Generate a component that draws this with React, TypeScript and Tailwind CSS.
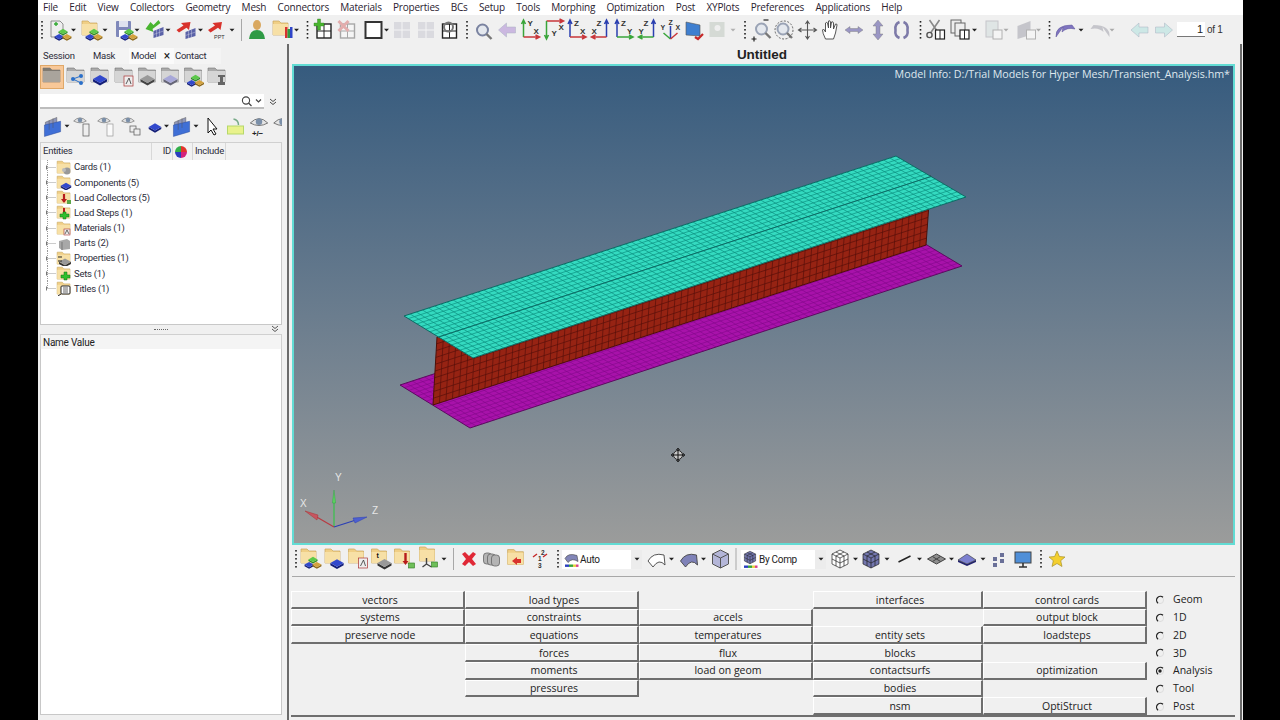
import React from "react";

type Item = [number, React.ReactNode];

const menus = ["File", "Edit", "View", "Collectors", "Geometry", "Mesh", "Connectors", "Materials", "Properties", "BCs", "Setup", "Tools", "Morphing", "Optimization", "Post", "XYPlots", "Preferences", "Applications", "Help"];

const tree = ["Cards (1)", "Components (5)", "Load Collectors (5)", "Load Steps (1)", "Materials (1)", "Parts (2)", "Properties (1)", "Sets (1)", "Titles (1)"];

const cells = [
  "vectors", "load types", "", "interfaces", "control cards",
  "systems", "constraints", "accels", "", "output block",
  "preserve node", "equations", "temperatures", "entity sets", "loadsteps",
  "", "forces", "flux", "blocks", "",
  "", "moments", "load on geom", "contactsurfs", "optimization",
  "", "pressures", "", "bodies", "",
  "", "", "", "nsm", "OptiStruct",
];

const radios = ["Geom", "1D", "2D", "3D", "Analysis", "Tool", "Post"];

// lays icons out by flow, each svg runs from midpoint to midpoint so the drawing lands on its centre
function IconRow({ items, start, end, h }: { items: Item[]; start: number; end: number; h: number }) {
  return (
    <div className="flex shrink-0 items-center">
      {items.map(([c, node], i) => {
        const l = i === 0 ? start : (items[i - 1][0] + c) / 2;
        const r = i === items.length - 1 ? end : (items[i + 1][0] + c) / 2;
        return (
          <svg key={i} width={r - l} height={h} viewBox={`${l - c} ${-h / 2} ${r - l} ${h}`} className="block shrink-0 overflow-visible">
            {node}
          </svg>
        );
      })}
    </div>
  );
}

const Grip = () => (
  <g fill="#222">
    {[-9, -5, -1, 3, 7].map((y) => (
      <rect key={y} x={-0.8} y={y} width={1.6} height={1.6} />
    ))}
  </g>
);

const Drop = ({ c = "#222" }: { c?: string }) => <path d="M-2.5 -1.2 H2.5 L0 1.4Z" fill={c} />;

const Sep = () => <rect x={-0.5} y={-11} width={1} height={22} fill="#a8a8a8" />;

const Diamond = ({ x = 0, y = 0, s = 1, c = "#3249cc", d = "#141f78" }: { x?: number; y?: number; s?: number; c?: string; d?: string }) => (
  <g transform={`translate(${x} ${y}) scale(${s})`}>
    <path d="M-7 1 L0 5 L7 1 V3.4 L0 7.4 L-7 3.4Z" fill={d} />
    <path d="M-7 1 L0 -3 L7 1 L0 5Z" fill={c} />
  </g>
);

const Cluster = ({ x = 0, y = 0, s = 0.65 }: { x?: number; y?: number; s?: number }) => (
  <g transform={`translate(${x} ${y}) scale(${s})`}>
    <Diamond y={-5} c="#5cc94a" d="#2d8a28" />
    <Diamond x={-6} y={3} />
    <Diamond x={6} y={3} c="#d3a23d" d="#8a6518" />
  </g>
);

const Folder = ({ x = 0, y = 0, s = 1 }: { x?: number; y?: number; s?: number }) => (
  <g transform={`translate(${x} ${y}) scale(${s})`}>
    <path d="M-8 -8 H-2 L0 -6 H7 V6 H-8Z" fill="#f0cf86" stroke="#c8a55c" strokeWidth={0.7} />
    <path d="M-8 -5 H7 V6 H-8Z" fill="#f7e0a6" />
  </g>
);

const GrayFolder = ({ sel }: { sel?: boolean }) => (
  <g>
    <path d="M-9 -9 H-2 L0 -7 H8 V5 H-9Z" fill={sel ? "#807a70" : "#aaa"} stroke="#777" strokeWidth={0.6} />
    <rect x={-9} y={-6} width={17} height={11} fill={sel ? "#a9a49c" : "#d5d5d5"} />
  </g>
);

const Panes = ({ s = 1 }: { s?: number }) => (
  <g transform={`scale(${s})`}>
    <path d="M-8 -4 L4 -9 V3 L-8 8Z" fill="#8f96b8" stroke="#555" strokeWidth={0.5} />
    <path d="M-9 -1 L8 -5 V6 L-9 11Z" fill="#3f6fd6" stroke="#2b4a9c" strokeWidth={0.5} />
    <path d="M-4 -6 V4 M0 -8 V2" stroke="#555" strokeWidth={0.5} />
  </g>
);

const Win = ({ x = 0, y = 0 }: { x?: number; y?: number }) => (
  <g transform={`translate(${x} ${y})`}>
    <rect x={-7} y={-7} width={14} height={14} fill="#fff" stroke="#222" strokeWidth={1.4} />
    <path d="M0 -7 V7 M-7 0 H7" stroke="#222" strokeWidth={1} />
  </g>
);

const Panel = ({ x = 0, y = 0 }: { x?: number; y?: number }) => (
  <g transform={`translate(${x} ${y})`}>
    <path d="M-5 -1 L5 -5 V3 L-5 6Z" fill="#5a62a8" />
    <path d="M-2 -2 V5 M1 -3 V4 M-5 2.5 L5 -1" stroke="#c6c9e0" strokeWidth={0.5} />
  </g>
);

const RedArrow = ({ x = 0, y = 0 }: { x?: number; y?: number }) => (
  <path transform={`translate(${x} ${y})`} d="M-7 3 L0 -1.5 L-2.5 -4 L7 -5 L5.5 3 L3 0.8 L-4.5 5.5Z" fill="#d8322c" />
);

const Eye = ({ x = 0, y = 0, s = 1 }: { x?: number; y?: number; s?: number }) => (
  <g transform={`translate(${x} ${y}) scale(${s})`}>
    <path d="M-7 0 Q0 -7 7 0 Q0 4 -7 0Z" fill="#e5e5e5" stroke="#777" strokeWidth={0.8} />
    <circle cy={-1} r={2.6} fill="#7b8fa8" />
  </g>
);

function Axis({ v, h, vl, hl, flip, down }: { v: string; h: string; vl: string; hl: string; flip?: boolean; down?: boolean }) {
  return (
    <g transform="translate(-11 -12)" fontFamily="Liberation Sans" fontWeight="bold" fontSize="8" fill="#333">
      {flip ? (
        <>
          <path d={`M17 3 V19 M15 6 L17 2 L19 6`} stroke={v} strokeWidth={1.5} fill="none" />
          <path d="M17 19 H3 M6 17 L2 19 L6 21" stroke={h} strokeWidth={1.5} fill="none" />
          <text x={7} y={8}>{vl}</text>
          <text x={2} y={16}>{hl}</text>
        </>
      ) : down ? (
        <>
          <path d="M4 3 H20 M17 1 L21 3 L17 5" stroke={h} strokeWidth={1.5} fill="none" />
          <path d="M4 3 V20 M2 17 L4 21 L6 17" stroke={v} strokeWidth={1.5} fill="none" />
          <text x={9} y={18}>{vl}</text>
          <text x={16} y={12}>{hl}</text>
        </>
      ) : (
        <>
          <path d="M4 3 V19 M2 6 L4 2 L6 6" stroke={v} strokeWidth={1.5} fill="none" />
          <path d="M4 19 H19 M16 17 L20 19 L16 21" stroke={h} strokeWidth={1.5} fill="none" />
          <text x={8} y={8}>{vl}</text>
          <text x={14} y={16}>{hl}</text>
        </>
      )}
    </g>
  );
}

const Glass = ({ x = 0, y = 0, c = "#9aa3b5" }: { x?: number; y?: number; c?: string }) => (
  <g transform={`translate(${x} ${y})`}>
    <circle r={5.5} fill="#e4e8ee" stroke={c} strokeWidth={2} />
    <path d="M4 4 L9 9" stroke="#777" strokeWidth={2.4} />
  </g>
);

const ArrowBig = ({ dir, c = "#cbb8e0" }: { dir: number; c?: string }) => (
  <path transform={`scale(${dir} 1)`} d="M-9 0 L-1 -7 V-3 H8 V3 H-1 V7Z" fill={c} stroke="#a8b0c0" strokeWidth={0.5} />
);

const Doc = ({ x = 0, y = 0 }: { x?: number; y?: number }) => (
  <g transform={`translate(${x} ${y})`}>
    <path d="M-6 -8 H3 L6 -5 V8 H-6Z" fill="#eee" stroke="#777" strokeWidth={0.8} />
  </g>
);

const Rainbow = ({ y }: { y: number }) => (
  <g>
    <rect x={-6} y={y} width={4} height={2.4} fill="#2a3fc0" />
    <rect x={-2} y={y} width={4} height={2.4} fill="#3aa53a" />
    <rect x={2} y={y} width={3} height={2.4} fill="#e6d040" />
    <rect x={5} y={y} width={2.5} height={2.4} fill="#d8408a" />
  </g>
);

const topItems: Item[] = [
  [42, <Grip />],
  [60, <g><Doc x={-3} y={-1} /><path d="M-6 -6 h4 M-4 -8 v4" stroke="#3a3" strokeWidth={1.4} /><Cluster x={3} y={4} /></g>],
  [73, <Drop />],
  [91, <g><Folder x={-1} y={-1} /><Cluster x={3} y={4} /></g>],
  [105, <Drop />],
  [125, <g><rect x={-9} y={-9} width={15} height={16} rx={1} fill="#7f88ba" /><rect x={-6} y={-9} width={9} height={6} fill="#dfe2ef" /><rect x={-6} y={0} width={9} height={7} fill="#fff" /><Cluster x={4} y={4} /></g>],
  [137, <Drop />],
  [156, <g><path d="M2 -10 L-3 -5 L-6 -8 L-11 -1 L-3 2 L-4 -1 L4 -7Z" fill="#49b52f" /><Panel x={2} y={2} /></g>],
  [168, <Drop />],
  [189, <g><RedArrow x={-6} y={-3} /><Panel x={1} y={3} /></g>],
  [200, <Drop />],
  [216, <g><RedArrow x={-1} y={-3} /><text x={-2} y={9} fontSize={5.5} fontFamily="Liberation Sans" fill="#333">PPT</text></g>],
  [232, <Drop />],
  [241, <Sep />],
  [257, <g><ellipse cy={-5} rx={4} ry={5} fill="#d9a860" /><path d="M-8 9 Q-7 0 0 0 Q7 0 8 9Z" fill="#2f9a45" /></g>],
  [283, <g><Folder x={-2} y={-1} /><rect x={2} y={-3} width={2.5} height={11} fill="#d83030" /><rect x={4.5} y={-1} width={2.5} height={9} fill="#2f9a45" /><rect x={7} y={-3} width={2.5} height={11} fill="#2f45c8" /></g>],
  [296, <Drop />],
  [307, <Grip />],
  [323, <g><Win x={1} y={1} /><path d="M-9 -7 H-5.5 V-11 H-2.5 V-7 H1 V-4 H-2.5 V0 H-5.5 V-4 H-9Z" fill="#49b52f" stroke="#2d7a20" strokeWidth={0.4} /></g>],
  [346, <g opacity={0.35}><Win x={1} y={1} /><path d="M-8 -9 L2 1 M2 -9 L-8 1" stroke="#c33" strokeWidth={3} /></g>],
  [373, <rect x={-8} y={-8} width={16} height={16} fill="#fff" stroke="#333" strokeWidth={2} />],
  [386, <Drop />],
  [402, <g opacity={0.3}><rect x={-8} y={-8} width={16} height={16} fill="#aab" /><path d="M0 -8 V8 M-8 0 H8" stroke="#fff" /></g>],
  [426, <g opacity={0.3}><rect x={-8} y={-8} width={16} height={16} fill="#aab" /><path d="M0 -8 V8 M-8 0 H8" stroke="#fff" /></g>],
  [449, <g><Win x={0} y={1} /><circle cx={-1} cy={-3} r={4.5} fill="none" stroke="#777" strokeWidth={2} /></g>],
  [467, <Grip />],
  [482, <Glass c="#7a83a0" />],
  [507, <ArrowBig dir={1} />],
  [530, <Axis v="#3aa53a" h="#c8363a" vl="Y" hl="X" />],
  [553, <Axis v="#3aa53a" h="#c8363a" vl="Y" hl="X" down />],
  [577, <Axis v="#2a3fb0" h="#c8363a" vl="Z" hl="X" />],
  [600, <Axis v="#2a3fb0" h="#c8363a" vl="Z" hl="X" flip />],
  [624, <Axis v="#2a3fb0" h="#3aa53a" vl="Z" hl="Y" />],
  [647, <Axis v="#2a3fb0" h="#3aa53a" vl="Z" hl="Y" flip />],
  [670, <g fontFamily="Liberation Sans" fontWeight="bold" fontSize="7" fill="#333"><path d="M0 9 V-4" stroke="#2a3fb0" strokeWidth={1.5} /><path d="M0 9 L-7 3" stroke="#3aa53a" strokeWidth={1.5} /><path d="M0 9 L7 3" stroke="#c8363a" strokeWidth={1.5} /><text x={-10} y={0}>Y</text><text x={-2} y={-5}>Z</text><text x={5} y={0}>X</text></g>],
  [694, <g><path d="M-8 -8 L6 -5 V6 L-8 5Z" fill="#3f7fd0" stroke="#555" strokeWidth={0.6} /><path d="M1 7 L4 9 L9 4" stroke="#c62828" strokeWidth={2.2} fill="none" /></g>],
  [717, <g opacity={0.3}><rect x={-8} y={-8} width={15} height={15} fill="#9a9" /><circle cy={-2} r={3} fill="#eee" /></g>],
  [733, <g opacity={0.3}><Drop /></g>],
  [745, <Grip />],
  [760, <g><Glass x={1} y={-1} /><path d="M-9 9 H-4 M-6.5 6.5 V11.5" stroke="#222" strokeWidth={1.2} /><path d="M3 -10 H8" stroke="#222" strokeWidth={1.2} /></g>],
  [784, <g><Glass x={-1} y={-1} /><circle r={9} fill="none" stroke="#444" strokeWidth={0.8} strokeDasharray="2 1.5" /></g>],
  [807, <path d="M0 -9 V9 M-9 0 H9 M-2 -6 L0 -9 L2 -6 M-2 6 L0 9 L2 6 M-6 -2 L-9 0 L-6 2 M6 -2 L9 0 L6 2" stroke="#555" strokeWidth={1.1} fill="none" />],
  [830, <path d="M-5 9 Q-8 3 -8 0 L-7 -1 L-5 2 V-7 Q-3.5 -8.5 -3 -7 L-2 -2 V-9 Q-0.5 -10 0 -8 V-2 L1 -8 Q2.5 -9 3 -7 V-1 L5 -6 Q6.5 -6.5 6.5 -5 L5 3 L3 9Z" fill="#fff" stroke="#444" strokeWidth={0.9} />],
  [854, <path d="M-9 0 L-4 -3.5 V-1.5 H4 V-3.5 L9 0 L4 3.5 V1.5 H-4 V3.5Z" fill="#9a96c4" stroke="#777" strokeWidth={0.4} />],
  [878, <path d="M0 -10 L-5 -4 H-2 V4 H-5 L0 10 L5 4 H2 V-4 H5Z" fill="#9a96c4" stroke="#777" strokeWidth={0.4} />],
  [901, <g fill="none" stroke="#7d7aa8" strokeWidth={2.6}><path d="M-2 -8 Q-7 -6 -6 0 Q-7 6 -2 8" /><path d="M2 -8 Q7 -6 6 0 Q7 6 2 8" /></g>],
  [920, <Grip />],
  [935, <g><path d="M-6 -10 L3 3 M4 -10 L-5 3" stroke="#888" strokeWidth={1.6} /><circle cx={-6} cy={5} r={2.6} fill="none" stroke="#555" strokeWidth={1.4} /><rect x={0} y={0} width={9} height={9} fill="#fff" stroke="#222" strokeWidth={1.2} /><path d="M4.5 0 V9" stroke="#222" /></g>],
  [961, <g><rect x={-10} y={-10} width={10} height={13} fill="#eee" stroke="#666" /><rect x={-6} y={-7} width={10} height={13} fill="#eee" stroke="#666" /><rect x={-1} y={0} width={9} height={9} fill="#fff" stroke="#222" strokeWidth={1.2} /><path d="M3.5 0 V9" stroke="#222" /></g>],
  [974, <Drop />],
  [994, <g opacity={0.3}><rect x={-8} y={-9} width={12} height={16} fill="#bcc" stroke="#667" /><rect x={-1} y={0} width={9} height={9} fill="#fff" stroke="#222" /></g>],
  [1006, <Drop c="#aaa" />],
  [1027, <g opacity={0.3}><path d="M-10 -4 L3 -9 V5 L-10 9Z" fill="#667" /><rect x={-1} y={0} width={9} height={9} fill="#fff" stroke="#222" /></g>],
  [1038, <Drop c="#aaa" />],
  [1049, <Grip />],
  [1065, <path d="M-9 7 Q-10 -5 7 -5 L10 -1 Q2 -3 -3 2 L-2 -3Z" fill="#7f74c0" stroke="#5a5296" strokeWidth={0.5} />],
  [1081, <Drop />],
  [1100, <g opacity={0.3}><path transform="scale(-1 1)" d="M-9 7 Q-10 -5 7 -5 L10 -1 Q2 -3 -3 2 L-2 -3Z" fill="#667" /></g>],
  [1112, <Drop c="#aaa" />],
  [1140, <ArrowBig dir={1} c="#cde8e6" />],
  [1163, <ArrowBig dir={-1} c="#cde8e6" />],
];

const leftTabs: Item[] = [
  [76, <g><GrayFolder /><circle cx={-3} cy={2} r={2} fill="#2a6fc9" /><circle cx={5} cy={-1} r={2} fill="#2a6fc9" /><circle cx={5} cy={6} r={2} fill="#2a6fc9" /><path d="M-3 2 L5 -1 M-3 2 L5 6" stroke="#2a6fc9" /></g>],
  [100, <g><GrayFolder /><Diamond y={1} /></g>],
  [124, <g><GrayFolder /><rect x={0} y={-1} width={9} height={10} fill="#eee" stroke="#a33" strokeWidth={0.7} /><path d="M2 7 L5 1 L7 7" stroke="#333" fill="none" strokeWidth={0.8} /></g>],
  [147, <g><GrayFolder /><Diamond y={1} c="#999" d="#444" /></g>],
  [170, <g><GrayFolder /><Diamond y={1} c="#a8a8d8" d="#667" /></g>],
  [193, <g><GrayFolder /><Cluster x={2} y={3} /></g>],
  [217, <g><GrayFolder /><path d="M1 -2 H8 V0 H6 V5 H8 V8 H1 V5 H3 V0 H1Z" fill="#666" /></g>],
];

const entityTools: Item[] = [
  [53, <Panes s={0.95} />],
  [67, <Drop />],
  [83, <g><Eye x={-3} y={-5} s={0.9} /><rect x={0} y={-2} width={6} height={12} fill="#eee" stroke="#555" strokeWidth={0.7} /></g>],
  [107, <g><Eye x={-3} y={-5} s={0.9} /><rect x={0} y={-2} width={6} height={12} fill="#fafafa" stroke="#999" strokeWidth={0.7} /></g>],
  [131, <g><Eye x={-3} y={-5} s={0.9} /><rect x={-1} y={0} width={6} height={6} fill="#eee" stroke="#555" strokeWidth={0.7} /><rect x={3} y={3} width={6} height={6} fill="#eee" stroke="#555" strokeWidth={0.7} /></g>],
  [155, <Diamond s={0.9} />],
  [166, <Drop />],
  [182, <Panes s={0.95} />],
  [196, <Drop />],
  [212, <path d="M-4 -8 V7 L-1 4 L2 9 L4 8 L1 3 L5 3Z" fill="#fff" stroke="#111" strokeWidth={1} />],
  [235, <g><rect x={-8} y={0} width={16} height={8} fill="#e9f28c" stroke="#b6d86a" /><path d="M-2 -7 Q3 -6 3 -1" stroke="#7a8" fill="none" strokeWidth={1.5} /></g>],
  [259, <g><Eye y={-3} s={1.25} /><text x={-7} y={10} fontSize={8} fontWeight="bold" fill="#222" fontFamily="Liberation Sans">+/−</text></g>],
  [282, <g><Eye y={-3} s={1.25} /></g>],
];

const bottomA: Item[] = [
  [296, <Grip />],
  [312, <g><Folder x={-3} y={-2} /><Cluster x={1} y={3} /></g>],
  [336, <g><Folder x={-3} y={-2} /><Diamond x={1} y={3} s={0.95} /></g>],
  [359, <g><Folder x={-3} y={-2} /><rect x={-1} y={-1} width={9} height={10} fill="#eee" stroke="#a33" strokeWidth={0.7} /><path d="M1 7 L4 1 L6 7" stroke="#333" fill="none" strokeWidth={0.8} /></g>],
  [382, <g><Folder x={-3} y={-2} /><Diamond x={2} y={3} c="#999" d="#333" /><text x={-6} y={-1} fontSize={7} fontWeight="bold" fill="#111" fontFamily="Liberation Sans">t</text></g>],
  [405, <g><Folder x={-3} y={-2} /><path d="M0 -6 V4" stroke="#b71c1c" strokeWidth={2.4} /><path d="M-3 2 H3 L0 6Z" fill="#b71c1c" /><rect x={3} y={4} width={6} height={5} fill="#6fbf5a" stroke="#2d7a20" strokeWidth={0.6} /></g>],
  [428, <g><Folder x={-1} y={-4} /><path d="M-2 -1 V5 L-6 8 M-2 5 L3 8" stroke="#444" strokeWidth={1.4} fill="none" /><rect x={3} y={3} width={6} height={5} fill="#6fbf5a" stroke="#2d7a20" strokeWidth={0.6} /></g>],
  [444, <Drop />],
  [453, <Sep />],
  [469, <path d="M-7 -5 L-4 -7 L0 -3 L4 -7 L7 -5 L3 0 L7 5 L4 7 L0 3 L-4 7 L-7 5 L-3 0Z" fill="#e02836" />],
  [492, <g fill="#b4b4b4" stroke="#666" strokeWidth={0.8}><rect x={-9} y={-6} width={8} height={11} rx={3} /><rect x={-5} y={-5} width={8} height={11} rx={3} /><rect x={-1} y={-4} width={8} height={11} rx={3} /></g>],
  [516, <g><Folder y={-1} s={1.05} /><path d="M-4 2 L1 -2 V0 H5 V4 H1 V6Z" fill="#d8322c" /></g>],
  [540, <g fontFamily="Liberation Sans" fontWeight="bold" fontSize="6.5" fill="#333"><text x={1} y={-4}>2</text><text x={-2} y={2}>1</text><text x={-2} y={9}>3</text><path d="M-7 -2 L-3 -5 M7 -5 L3 -2" stroke="#c62828" strokeWidth={1.4} /></g>],
  [558, <Grip />],
];

const bottomB: Item[] = [
  [656, <path d="M-8 2 Q-3 -7 8 -4 L9 6 Q3 -1 -3 8Z" fill="#fff" stroke="#444" strokeWidth={0.9} />],
  [671, <Drop />],
  [688, <path d="M-8 2 Q-3 -7 8 -4 L9 6 Q3 -1 -3 8Z" fill="#7f82b8" stroke="#444" strokeWidth={0.9} />],
  [703, <Drop />],
  [720, <g><path d="M0 -9 L8 -5 V5 L0 9 L-8 5 V-5Z" fill="#b4b6d8" stroke="#555" /><path d="M-8 -5 L0 -1 L8 -5 M0 -1 V9" stroke="#555" fill="none" /></g>],
  [736, <Sep />],
];

const Cube = ({ fill }: { fill: string }) => (
  <g stroke="#222" strokeWidth={0.7}>
    <path d="M0 -9 L8 -5 V5 L0 9 L-8 5 V-5Z" fill={fill} />
    <path d="M-8 -5 L0 -1 L8 -5 M0 -1 V9 M-8 0 L0 4 L8 0 M-4 -7 L4 -3 M4 -7 L-4 -3 M-4 -3 V7 M4 -3 V7" fill="none" />
  </g>
);

const bottomC: Item[] = [
  [840, <Cube fill="#fff" />],
  [855, <Drop />],
  [871, <Cube fill="#7276ae" />],
  [887, <Drop />],
  [904, <path d="M-6 3 L6 -3" stroke="#222" strokeWidth={1.4} />],
  [919, <Drop />],
  [936, <g><path d="M-9 0 L0 -5 L9 0 L0 5Z" fill="#8f8f8f" stroke="#444" /><path d="M-4 -2.5 L4 2.5 M4 -2.5 L-4 2.5" stroke="#444" /></g>],
  [951, <Drop />],
  [967, <g><path d="M-9 1 L0 5 L9 1 V3 L0 7 L-9 3Z" fill="#222270" /><path d="M-9 1 L0 -5 L9 1 L0 5Z" fill="#7c80d0" stroke="#333" strokeWidth={0.6} /></g>],
  [983, <Drop />],
  [999, <g fill="#6a7098"><rect x={-6} y={-2} width={4} height={4} /><rect x={1} y={-6} width={4} height={4} /><rect x={1} y={0} width={4} height={4} /><rect x={-6} y={4} width={4} height={4} /></g>],
  [1023, <g><rect x={-8} y={-7} width={16} height={11} fill="#4f8fd8" stroke="#444" /><path d="M-4 8 H4 M0 4 V8" stroke="#333" strokeWidth={1.6} /></g>],
  [1041, <Grip />],
  [1057, <path d="M0 -8 L2.4 -2.5 L8 -2 L3.7 1.7 L5 7.5 L0 4.5 L-5 7.5 L-3.7 1.7 L-8 -2 L-2.4 -2.5Z" fill="#f4cf2e" stroke="#a8922a" strokeWidth={0.7} />],
];

const treeIcons: React.ReactNode[] = [
  <g><Folder s={0.85} /><circle cx={3} cy={3} r={3.5} fill="#999" /><circle cx={0} cy={2} r={2} fill="#bbb" /></g>,
  <g><Folder s={0.85} /><Diamond x={2} y={2} s={0.75} /></g>,
  <g><Folder s={0.85} /><path d="M0 -4 V4" stroke="#b71c1c" strokeWidth={2.2} /><path d="M-3 1 H3 L0 5Z" fill="#b71c1c" /><rect x={3} y={2} width={4} height={4} fill="#5aa548" /></g>,
  <g><Folder s={0.85} /><path d="M0 -5 V1" stroke="#b71c1c" strokeWidth={2} /><path d="M-1 -1 H2 V1 H5 V4 H2 V6 H-1 V4 H-4 V1 H-1Z" fill="#2ec02e" stroke="#156b15" strokeWidth={0.5} /></g>,
  <g><Folder s={0.85} /><rect x={0} y={0} width={6} height={6} fill="#eee" stroke="#a33" strokeWidth={0.6} /><path d="M1 5 L3 1 L5 5" stroke="#333" fill="none" strokeWidth={0.7} /></g>,
  <g><path d="M-5 -3 L3 -5 L6 -3 V5 L-2 6 L-5 4Z" fill="#a8a8a8" /><path d="M-2 -2 V6" stroke="#777" /></g>,
  <g><Folder s={0.85} /><Diamond x={1} y={2} c="#999" d="#333" s={0.85} /><path d="M-6 -2 H-2 M-6 2 H-2" stroke="#222" strokeWidth={1} /></g>,
  <g><Folder s={0.85} /><path d="M0 -2 H3 V1 H6 V4 H3 V6 H0 V4 H-3 V1 H0Z" fill="#2ec02e" stroke="#156b15" strokeWidth={0.5} /></g>,
  <g><Folder s={0.85} /><rect x={-3} y={-3} width={9} height={8} rx={1} fill="#fff" stroke="#222" /><path d="M-1 -1 H4 M-1 1 H4 M-1 3 H4" stroke="#222" strokeWidth={0.7} /><path d="M-3 5 L-6 7" stroke="#222" /></g>,
];

// mesh lines for one face of the beam
function meshLines(p: number[][], nu: number, nv: number) {
  const [a, b, c, d] = p;
  const lerp = (m: number[], n: number[], t: number) => [m[0] + (n[0] - m[0]) * t, m[1] + (n[1] - m[1]) * t];
  let out = "";
  for (let i = 1; i < nu; i++) {
    const s = lerp(a, b, i / nu);
    const e = lerp(d, c, i / nu);
    out += `M${s[0]} ${s[1]}L${e[0]} ${e[1]}`;
  }
  for (let j = 1; j < nv; j++) {
    const s = lerp(a, d, j / nv);
    const e = lerp(b, c, j / nv);
    out += `M${s[0]} ${s[1]}L${e[0]} ${e[1]}`;
  }
  return out;
}

const pts = (p: number[][]) => p.map((q) => q.join(",")).join(" ");

function Face({ p, nu, nv, fill, line, edge, lw }: { p: number[][]; nu: number; nv: number; fill: string; line: string; edge: string; lw: number }) {
  return (
    <g>
      <polygon points={pts(p)} fill={fill} />
      <path d={meshLines(p, nu, nv)} stroke={line} strokeWidth={lw} fill="none" />
      <polygon points={pts(p)} fill="none" stroke={edge} strokeWidth={1} />
    </g>
  );
}

// coordinates below are page pixels, the svg sits at the viewport's origin (292,64)
const ox = 292;
const oy = 64;
const at = (p: number[][]) => p.map(([x, y]) => [x - ox, y - oy]);

function Beam() {
  const top = at([[404, 316], [896, 156], [966, 197], [473, 358]]);
  const web = at([[437, 337], [931, 176], [926, 245], [433, 405]]);
  const flange = at([[400, 385], [892, 224], [962, 266], [470, 428]]);
  const mid = at([[438.5, 337], [931, 176.5]]);
  return (
    <svg width={943} height={481} className="absolute left-0 top-0 overflow-hidden">
      <Face p={flange} nu={80} nv={16} fill="#a812aa" line="#82088a" edge="#5c0a60" lw={0.6} />
      <Face p={web} nu={76} nv={10} fill="#962313" line="#58100a" edge="#4e1009" lw={0.7} />
      <Face p={top} nu={80} nv={16} fill="#34dac0" line="#0c8f80" edge="#0d6a64" lw={0.7} />
      <line x1={mid[0][0]} y1={mid[0][1]} x2={mid[1][0]} y2={mid[1][1]} stroke="#0d6a64" strokeWidth={1} />
      <g transform={`translate(${334 - ox} ${527 - oy})`} fontFamily="Liberation Sans" fontSize="10" fill="#e6e6e6">
        <path d="M0 0 L0 -30" stroke="#37c24a" strokeWidth={1.2} />
        <path d="M-1.6 -24 L0 -37 L1.6 -24Z" fill="#5cd35f" stroke="#37a24a" strokeWidth={0.5} />
        <path d="M0 0 L-19 -11" stroke="#b83a42" strokeWidth={1.2} />
        <path d="M-17 -7 L-29 -16 L-16 -12Z" fill="#c65560" stroke="#a33" strokeWidth={0.5} />
        <path d="M0 0 L22 -7" stroke="#2b3fb5" strokeWidth={1.2} />
        <path d="M19 -9 L33 -10 L21 -4Z" fill="#4d5fd0" stroke="#2b3fb5" strokeWidth={0.5} />
        <text x={1} y={-46}>Y</text>
        <text x={-34} y={-20}>X</text>
        <text x={38} y={-13}>Z</text>
      </g>
      <g transform={`translate(${678 - ox} ${455 - oy})`}>
        <circle r={4.5} fill="#c8c8c8" stroke="#222" strokeWidth={1} />
        <path d="M-6.5 0 H6.5 M0 -6.5 V6.5 M-1.6 -5 L0 -6.8 L1.6 -5 M-1.6 5 L0 6.8 L1.6 5 M-5 -1.6 L-6.8 0 L-5 1.6 M5 -1.6 L6.8 0 L5 1.6" stroke="#111" strokeWidth={1} fill="none" />
      </g>
    </svg>
  );
}

function Combo({ label, icon, w }: { label: string; icon: React.ReactNode; w: string }) {
  return (
    <div className={`flex h-[19px] shrink-0 items-center bg-white ${w}`}>
      <svg width={18} height={19} viewBox="-9 -9.5 18 19" className="block shrink-0 overflow-visible">
        {icon}
      </svg>
      <span className="flex-1 font-['Roboto',sans-serif] text-[10px] tracking-[-0.3px] text-[#222]">{label}</span>
      <div className="flex h-full w-[11px] items-center justify-center bg-[#ececec]">
        <svg width={8} height={6} viewBox="-4 -3 8 6">
          <Drop />
        </svg>
      </div>
    </div>
  );
}

function Radio({ on }: { on: boolean }) {
  return (
    <svg width={10} height={10} viewBox="0 0 10 10" className="block shrink-0">
      <circle cx={5} cy={5} r={3.6} fill="none" stroke="#ddd" strokeWidth={1} />
      <path d="M8 2.2 A3.9 3.9 0 0 0 3 8.2" fill="none" stroke="#222" strokeWidth={1.3} />
      {on && <circle cx={5} cy={5} r={1.7} fill="#222" />}
    </svg>
  );
}

export default function App() {
  return (
    <div className="h-[720px] w-[1280px] overflow-hidden bg-black pl-[38px] font-['Open_Sans',sans-serif]">
      <div className="flex h-full w-[1205px] flex-col bg-[#f0f0f0]">
        <div className="flex h-[15px] items-center gap-[11.3px] bg-white pl-[5px] text-[10px] tracking-[-0.2px] text-[#2a2230]">
          {menus.map((m) => (
            <span key={m}>{m}</span>
          ))}
        </div>

        <div className="flex h-[29px] items-center">
          <IconRow items={topItems} start={38} end={1177} h={28} />
          <div className="h-[15px] w-[28px] border-b border-[#777] bg-white pr-[2px] text-right font-['Liberation_Sans',sans-serif] text-[11px] leading-[15px] text-[#222]">1</div>
          <span className="ml-[2px] font-['Liberation_Sans',sans-serif] text-[10px] tracking-[-0.3px] text-[#333]">of 1</span>
        </div>

        <div className="flex min-h-0 flex-1">
          <div className="flex w-[245px] shrink-0 flex-col pl-[2px] pr-px font-['Roboto',sans-serif] text-[9.5px] tracking-[-0.25px] text-[#2c2c3a]">
            <div className="mt-[4px] flex h-[16px] items-stretch">
              <div className="flex w-[50px] items-center bg-[#f0f0f0] pl-[3px]">Session</div>
              <div className="flex w-[39px] items-center bg-[#f4f4f4] pl-[3px]">Mask</div>
              <div className="flex w-[45px] items-center justify-between bg-[#fafafa] pl-[2px] pr-[4px]">
                Model
                <span className="text-[12px] leading-none text-[#222]">×</span>
              </div>
              <div className="flex w-[47px] items-center bg-[#f4f4f4] pl-px">Contact</div>
            </div>

            <div className="flex h-[26px] items-center">
              <div className="flex h-[24px] w-[24px] items-center justify-center border border-[#e0a868] bg-[#f8c898]">
                <svg width={22} height={22} viewBox="-11 -11 22 22">
                  <GrayFolder sel />
                </svg>
              </div>
              <IconRow items={leftTabs} start={64} end={230} h={24} />
            </div>

            <div className="mt-[4px] flex h-[15px] items-center">
              <div className="flex h-full w-[224px] items-center justify-end border-b-2 border-[#bdbdbd] bg-white">
                <svg width={26} height={12} viewBox="0 0 26 12">
                  <circle cx={8} cy={5.5} r={3.6} fill="none" stroke="#444" strokeWidth={1.1} />
                  <path d="M10.5 8 L13.5 11" stroke="#444" strokeWidth={1.3} />
                  <path d="M18 4.5 L20.5 7 L23 4.5" stroke="#444" strokeWidth={1.2} fill="none" />
                </svg>
              </div>
              <svg width={8} height={8} viewBox="0 0 8 8" className="ml-[5px]">
                <path d="M1 1 L4 3.5 L7 1 M1 4 L4 6.5 L7 4" stroke="#333" fill="none" strokeWidth={0.9} />
              </svg>
            </div>

            <div className="flex h-[33px] items-center overflow-hidden">
              <IconRow items={entityTools} start={40} end={282} h={28} />
            </div>

            <div className="flex h-[18px] items-center border border-b-0 border-[#d0d0d0] bg-[#f2f2f2]">
              <div className="flex h-full w-[111px] items-center border-r border-[#d8d8d8] pl-[2px]">Entities</div>
              <div className="flex h-full w-[21px] items-center justify-end border-r border-[#d8d8d8] pr-px">ID</div>
              <div className="flex h-full w-[20px] items-center border-r border-[#d8d8d8] pl-[2px]">
                <svg width={12} height={12} viewBox="0 0 12 12">
                  <path d="M6 6 L6 0 A6 6 0 0 1 12 6Z" fill="#e2342c" />
                  <path d="M6 6 L12 6 A6 6 0 0 1 6 12Z" fill="#d4237c" />
                  <path d="M6 6 L6 12 A6 6 0 0 1 0 6Z" fill="#2a3fc0" />
                  <path d="M6 6 L0 6 A6 6 0 0 1 6 0Z" fill="#32b04a" />
                </svg>
              </div>
              <div className="flex h-full w-[33px] items-center border-r border-[#d8d8d8] pl-[2px]">Include</div>
            </div>

            <div className="h-[165px] border border-t-0 border-[#c8c8c8] bg-white">
              {tree.map((t, i) => (
                <div key={t} className="flex h-[15.17px] items-center">
                  <svg width={33} height={15.17} viewBox="0 0 33 15.17" className="block shrink-0">
                    <path d={i === tree.length - 1 ? "M6.5 0 V7.5" : "M6.5 0 V15.17"} stroke="#999" strokeDasharray="1 1" />
                    <path d="M6.5 7.5 H15" stroke="#999" strokeDasharray="1 1" />
                    <path d="M5.5 5.5 V9.5" stroke="#777" />
                    <g transform="translate(23 8) ">{treeIcons[i]}</g>
                  </svg>
                  <span>{t}</span>
                </div>
              ))}
            </div>

            <div className="relative flex h-[9px] items-center justify-center">
              <span className="h-px w-[14px] border-b border-dotted border-[#666]" />
              <svg width={8} height={8} viewBox="0 0 8 8" className="absolute right-[3px] top-0">
                <path d="M1 1 L4 3.5 L7 1 M1 4 L4 6.5 L7 4" stroke="#444" fill="none" strokeWidth={0.9} />
              </svg>
            </div>

            <div className="flex h-[15px] items-center border border-b-0 border-[#d0d0d0] bg-[#f4f4f4] pl-[2px] text-[10px] text-[#222]">Name Value</div>
            <div className="h-[366px] border border-t-0 border-[#c8c8c8] bg-white" />
          </div>

          <div className="ml-[4px] w-[2px] shrink-0 bg-[#6a6a6a]" />

          <div className="ml-[3px] flex w-[943px] shrink-0 flex-col">
            <div className="flex h-[20px] items-center justify-center pr-[3px] pt-[2px] font-['Liberation_Sans',sans-serif] text-[13.5px] font-bold text-[#222]">Untitled</div>

            <div className="relative h-[481px] shrink-0 border-2 border-[#62dcd4] bg-linear-to-b from-[#365b7e] to-[#9b9c9b]">
              <div className="absolute -left-[2px] -top-[2px]">
                <Beam />
              </div>
              <div className="absolute right-[3px] top-0 text-[10.7px] text-[#dfe8ee]">Model Info: D:/Trial Models for Hyper Mesh/Transient_Analysis.hm*</div>
            </div>

            <div className="flex h-[32px] shrink-0 items-center border-b border-[#a8a8a8] pb-[3px]">
              <IconRow items={bottomA} start={292} end={562} h={28} />
              <Combo
                w="w-[80px]"
                label="Auto"
                icon={
                  <g>
                    <path d="M-6 -1 Q-3 -7 6 -4 L7 2 Q1 -2 -3 3Z" fill="#8286b8" stroke="#444" strokeWidth={0.6} />
                    <Rainbow y={5} />
                  </g>
                }
              />
              <IconRow items={bottomB} start={642} end={741} h={28} />
              <Combo
                w="w-[85px]"
                label="By Comp"
                icon={
                  <g>
                    <g transform="translate(0 -2) scale(0.7)"><Cube fill="#7276ae" /></g>
                    <Rainbow y={6} />
                  </g>
                }
              />
              <IconRow items={bottomC} start={826} end={1235} h={28} />
            </div>

            <div className="-ml-px mt-[14px] grid h-[126px] shrink-0 grid-cols-[174px_174px_174px_170px_164px_88px] grid-rows-7 border-b-2 border-[#6e6e6e] text-[10.5px] text-[#222]">
              {cells.flatMap((c, i) => {
                const cell = c ? (
                  <div key={i} className="flex items-center justify-center border-b-2 border-r-2 border-l border-t border-b-[#6e6e6e] border-l-white border-r-[#6e6e6e] border-t-white pl-[5px] pt-px leading-none">
                    {c}
                  </div>
                ) : (
                  <div key={i} />
                );
                if (i % 5 !== 4) return [cell];
                const row = (i - 4) / 5;
                return [
                  cell,
                  <div key={`r${row}`} className="flex items-center gap-[8px] pl-[8px] pt-px">
                    <Radio on={radios[row] === "Analysis"} />
                    <span>{radios[row]}</span>
                  </div>,
                ];
              })}
            </div>
          </div>

          <div className="ml-[5px] w-[2px] shrink-0 bg-[#6a6a6a]" />
        </div>
      </div>
    </div>
  );
}
